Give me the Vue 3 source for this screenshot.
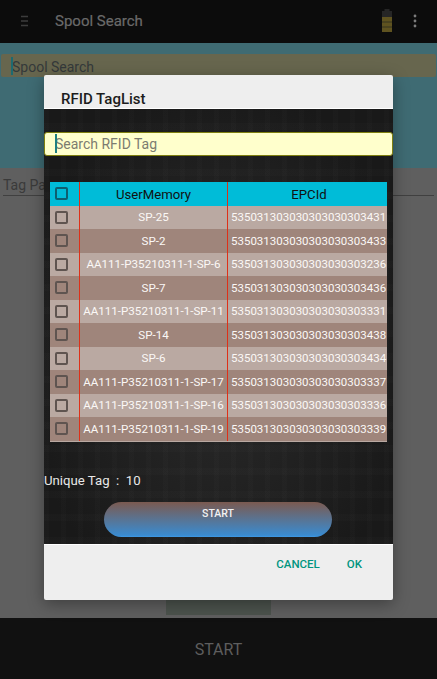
<script setup>
import { ref } from "vue";

const rows = ref([
  { mem: "SP-25", epc: "535031303030303030303431" },
  { mem: "SP-2", epc: "535031303030303030303433" },
  { mem: "AA111-P35210311-1-SP-6", epc: "535031303030303030303236" },
  { mem: "SP-7", epc: "535031303030303030303436" },
  { mem: "AA111-P35210311-1-SP-11", epc: "535031303030303030303331" },
  { mem: "SP-14", epc: "535031303030303030303438" },
  { mem: "SP-6", epc: "535031303030303030303434" },
  { mem: "AA111-P35210311-1-SP-17", epc: "535031303030303030303337" },
  { mem: "AA111-P35210311-1-SP-16", epc: "535031303030303030303336" },
  { mem: "AA111-P35210311-1-SP-19", epc: "535031303030303030303339" },
]);
</script>

<template>
  <div class="screen">
    <header class="topbar">
      <svg class="menu" width="9" height="12" viewBox="0 0 9 12">
        <path d="M1 1.5h7M1 6h7M1 10.5h7" stroke="#3c3c3c" stroke-width="1.3" fill="none" />
      </svg>
      <span class="title">Spool Search</span>
      <span class="flex-1"></span>
      <svg class="battery" width="12" height="24" viewBox="0 0 12 24">
        <rect x="3.5" y="0" width="5" height="3" fill="#262626" />
        <rect x="1" y="2" width="10" height="6" fill="#262626" />
        <rect x="1" y="8" width="10" height="15" fill="#5f5320" />
        <path d="M1 13h10M1 18h10" stroke="#37341f" stroke-width="1" />
      </svg>
      <svg class="dots" width="4" height="14" viewBox="0 0 4 14">
        <circle cx="2" cy="2" r="1.4" fill="#7c7c7c" />
        <circle cx="2" cy="7" r="1.4" fill="#7c7c7c" />
        <circle cx="2" cy="12" r="1.4" fill="#7c7c7c" />
      </svg>
    </header>

    <section class="teal">
      <div class="spool-input"><i class="caret"></i>Spool Search</div>
    </section>

    <section class="content">
      <div class="tag-field">Tag Pallet</div>
      <span class="flex-1"></span>
      <div class="stub"></div>
    </section>

    <footer class="bottombar">START</footer>

    <div class="dialog">
      <div class="dialog-title">RFID TagList</div>
      <div class="dialog-body">
        <div class="tag-search"><i class="caret"></i>Search RFID Tag</div>

        <div class="table">
          <div class="tr head">
            <div class="cell check"><span class="box"></span></div>
            <div class="cell mem">UserMemory</div>
            <div class="cell epc">EPCId</div>
          </div>
          <div v-for="(r, i) in rows" :key="r.epc" class="tr" :class="i % 2 ? 'even' : 'odd'">
            <div class="cell check"><span class="box"></span></div>
            <div class="cell mem">{{ r.mem }}</div>
            <div class="cell epc">{{ r.epc }}</div>
          </div>
        </div>

        <div class="unique">Unique Tag &nbsp;:&nbsp; 10</div>
        <button class="start">START</button>
      </div>
      <div class="dialog-actions">
        <span>CANCEL</span>
        <span>OK</span>
      </div>
    </div>
  </div>
</template>

<style>
html,
body {
  margin: 0;
  background: #111;
}
</style>

<style scoped>
* {
  box-sizing: border-box;
}

.flex-1 {
  flex: 1 1 0%;
}

.screen {
  position: relative;
  width: 437px;
  height: 679px;
  overflow: hidden;
  display: flex;
  flex-direction: column;
  font-family: Roboto, "Liberation Sans", sans-serif;
}

.topbar {
  height: 43px;
  flex: none;
  background: #0c0c0c;
  display: flex;
  align-items: center;
  padding: 0 20px 2px 20px;
}

.menu {
  margin-right: 26px;
}

.title {
  color: #6a6a6a;
  font-size: 15px;
  font-weight: 400;
  -webkit-text-stroke: 0.2px #6a6a6a;
}

.battery {
  margin-right: 20px;
}

.teal {
  height: 125px;
  flex: none;
  background: #3f6b73;
  padding: 11px 1px 0;
}

.spool-input {
  height: 23px;
  background: #67664e;
  border-radius: 2px;
  color: #34393a;
  font-size: 14px;
  line-height: 26px;
  padding-left: 11px;
  position: relative;
}

.caret {
  position: absolute;
  left: 10px;
  top: 3px;
  width: 1.5px;
  height: 18px;
  background: #1d6a70;
}

.content {
  flex: 1 1 0%;
  background: #5f5f5f;
  display: flex;
  flex-direction: column;
  align-items: center;
}

.tag-field {
  align-self: stretch;
  margin: 8px 3px 0;
  height: 20px;
  border-bottom: 1px solid #404040;
  color: #3a3a3a;
  font-size: 14px;
  line-height: 18px;
}

.stub {
  width: 105px;
  height: 15px;
  margin-bottom: 3px;
  background: #4c534d;
}

.bottombar {
  height: 61px;
  flex: none;
  background: #111;
  color: #5e5e5e;
  font-size: 16px;
  display: flex;
  align-items: center;
  justify-content: center;
  padding-top: 2px;
}

.dialog {
  position: absolute;
  left: 44px;
  top: 75px;
  width: 349px;
  height: 525px;
  display: flex;
  flex-direction: column;
  border-radius: 2px;
  overflow: hidden;
  box-shadow: 0 4px 16px rgba(0, 0, 0, 0.35);
}

.dialog-title {
  height: 34px;
  flex: none;
  background: #eeeeee;
  border-bottom: 1px solid #fff;
  color: #1c1c1c;
  font-size: 15px;
  font-weight: 500;
  padding: 16px 0 0 17px;
  line-height: 17px;
  overflow: hidden;
}

.dialog-body {
  flex: 1 1 0%;
  background:
    repeating-linear-gradient(90deg, rgba(255, 255, 255, 0.012) 0 5px, transparent 5px 17px),
    repeating-linear-gradient(0deg, rgba(255, 255, 255, 0.01) 0 7px, transparent 7px 23px),
    radial-gradient(ellipse at 50% 55%, #2b2b2b 0%, #191919 80%);
  display: flex;
  flex-direction: column;
  padding-top: 23px;
}

.tag-search {
  position: relative;
  height: 24px;
  background: #ffffcc;
  border: 1.5px solid #7f7f10;
  border-radius: 3px;
  color: #7c7c70;
  font-size: 14px;
  line-height: 23px;
  padding-left: 10px;
}

.tag-search .caret {
  left: 10px;
  top: 1px;
  height: 19px;
  background: #1f7f80;
}

.table {
  margin: 26px 6px 0;
  border-bottom: 1px solid #baa9a2;
  overflow: hidden;
}

.tr {
  display: flex;
  height: 23.5px;
  color: #fbf8f6;
  font-size: 11.6px;
}

.tr.head {
  height: 23.5px;
  background: #00bcd8;
  color: #111;
  font-size: 13.2px;
}

.head .mem,
.head .epc {
  padding-top: 1px;
}

.odd {
  background: #baa9a2;
}

.even {
  background: #9f857b;
}

.cell {
  display: flex;
  align-items: center;
  white-space: nowrap;
  overflow: hidden;
}

.check {
  width: 29px;
  flex: none;
  padding-left: 5px;
}

.box {
  width: 13px;
  height: 13px;
  border: 2px solid #5f5450;
  border-radius: 2px;
}

.head .box {
  border-color: #0d5f70;
}

.mem {
  width: 149px;
  flex: none;
  justify-content: center;
  border-left: 1px solid #de3018;
  border-right: 1px solid #de3018;
}

.epc {
  flex: 1 1 0%;
  padding-left: 3px;
  font-size: 11.5px;
}

.head .epc {
  justify-content: center;
  font-size: 13.2px;
}

.unique {
  margin-top: 31px;
  color: #e8e8e8;
  font-size: 13.2px;
  line-height: 15px;
}

.start {
  appearance: none;
  border: none;
  align-self: center;
  width: 228px;
  height: 35px;
  margin: 14px 1px 0 0;
  border-radius: 18px;
  background: linear-gradient(to bottom, #7b5a50 0%, #3a8bd0 95%, #3f9ae6 100%);
  color: #f2f2f2;
  font-family: inherit;
  font-size: 10.5px;
  font-weight: 500;
  padding: 0 0 11px;
}

.dialog-actions {
  height: 56px;
  flex: none;
  background: #eeeeee;
  border-top: 1px solid #fff;
  display: flex;
  justify-content: flex-end;
  gap: 27px;
  padding: 12px 31px 0 0;
  color: #00957f;
  font-size: 11.5px;
  font-weight: 500;
}
</style>
